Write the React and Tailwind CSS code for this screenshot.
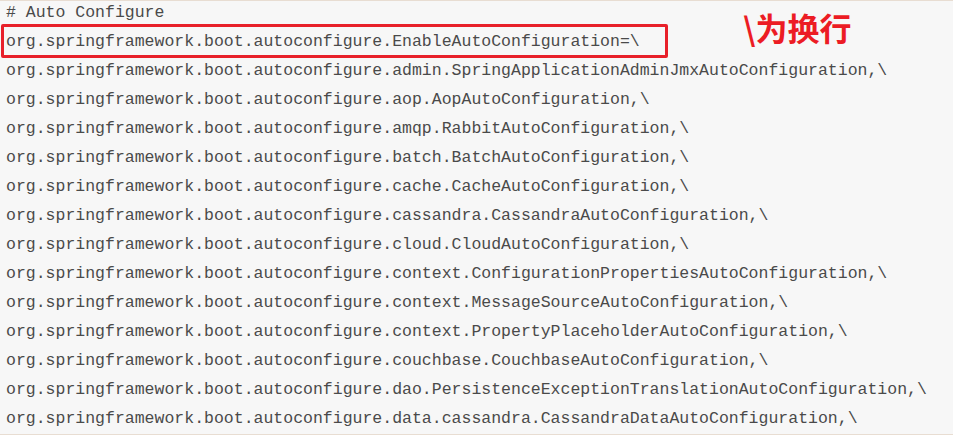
const lines = [
  "# Auto Configure",
  "org.springframework.boot.autoconfigure.EnableAutoConfiguration=\\",
  "org.springframework.boot.autoconfigure.admin.SpringApplicationAdminJmxAutoConfiguration,\\",
  "org.springframework.boot.autoconfigure.aop.AopAutoConfiguration,\\",
  "org.springframework.boot.autoconfigure.amqp.RabbitAutoConfiguration,\\",
  "org.springframework.boot.autoconfigure.batch.BatchAutoConfiguration,\\",
  "org.springframework.boot.autoconfigure.cache.CacheAutoConfiguration,\\",
  "org.springframework.boot.autoconfigure.cassandra.CassandraAutoConfiguration,\\",
  "org.springframework.boot.autoconfigure.cloud.CloudAutoConfiguration,\\",
  "org.springframework.boot.autoconfigure.context.ConfigurationPropertiesAutoConfiguration,\\",
  "org.springframework.boot.autoconfigure.context.MessageSourceAutoConfiguration,\\",
  "org.springframework.boot.autoconfigure.context.PropertyPlaceholderAutoConfiguration,\\",
  "org.springframework.boot.autoconfigure.couchbase.CouchbaseAutoConfiguration,\\",
  "org.springframework.boot.autoconfigure.dao.PersistenceExceptionTranslationAutoConfiguration,\\",
  "org.springframework.boot.autoconfigure.data.cassandra.CassandraDataAutoConfiguration,\\",
];

export default function App() {
  return (
    <div className="relative h-[435px] w-[953px] overflow-hidden bg-[#f7f7f7] border-t border-b border-[#e8ddd2]">
      {/* code listing */}
      <div className="-mt-[3px] pl-[6px] font-['Liberation_Mono','Courier_New',monospace] text-[16.5px] leading-[29px] text-[#4a4a4a] whitespace-pre">
        {lines.map((l, i) => (
          <div key={i}>{l}</div>
        ))}
      </div>

      {/* annotation */}
      <div className="absolute left-[1px] top-[23px] h-[34px] w-[667px] rounded-[2px] border-[3px] border-[#e8202a]"></div>
      <div className="absolute left-[743px] top-[5px] font-['Noto_Sans_CJK_SC','Noto_Sans',sans-serif] text-[32px] font-bold leading-[42px] text-[#ec1c24]">
        \为换行
      </div>
    </div>
  );
}
